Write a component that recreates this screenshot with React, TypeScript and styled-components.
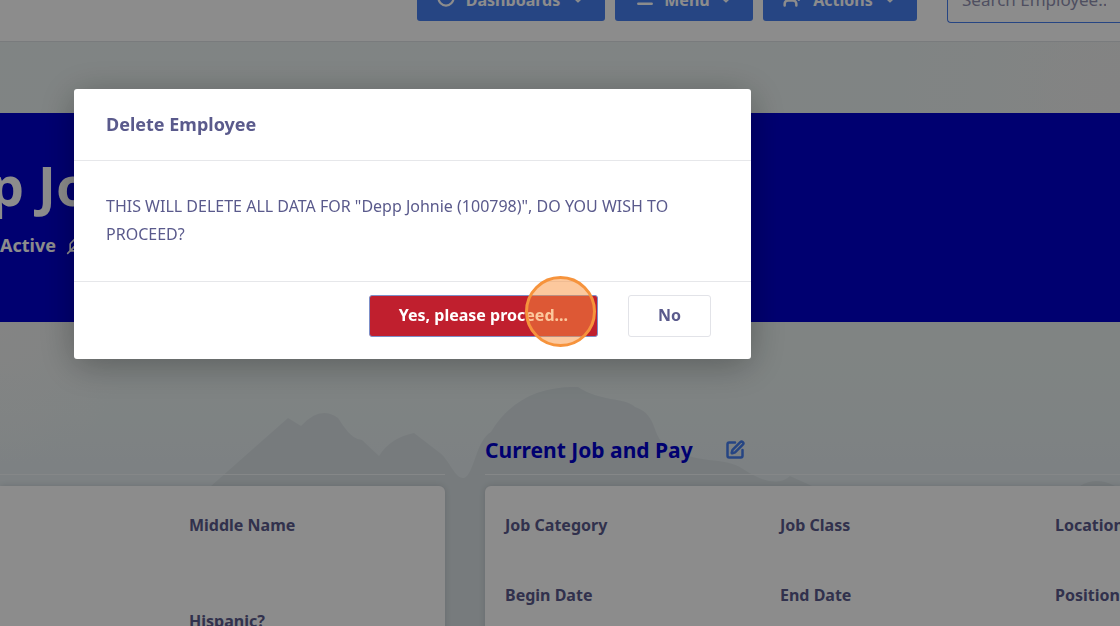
import React from "react";
import styled, { createGlobalStyle } from "styled-components";
import { ChevronDown, Circle, Menu, UserPlus, SquarePen, Feather } from "lucide-react";

const Global = createGlobalStyle`
  * { box-sizing: border-box; }
  html, body { margin: 0; height: 100%; overflow: hidden; }
  body, button, input { font-family: "Noto Sans", "Open Sans", sans-serif; }
  #root { height: 100%; }
`;

const Page = styled.div`
  position: relative;
  height: 100vh;
  overflow: hidden;
  background:
    radial-gradient(circle at 100% 15%, #efefef 0, rgba(239, 239, 239, 0) 220px),
    radial-gradient(circle at 0 52%, #f0f0f0 0, rgba(240, 240, 240, 0) 140px),
    linear-gradient(#eaf1f0 0, #e9f1ef 56%, #e4ecef 74%, #e4ecef 100%);
  color: #5a5a8c;
`;

const Scenery = styled.svg`
  position: absolute;
  inset: 0;
  width: 100%;
  height: 100%;
`;

const Content = styled.div`
  position: relative;
`;

const Header = styled.header`
  display: flex;
  align-items: flex-end;
  height: 42px;
  padding-bottom: 18px;
  border-bottom: 1px solid #dde0e4;
  background: #ffffff;
  overflow: hidden;
`;

const Nav = styled.nav`
  display: flex;
  align-items: center;
  flex: 1;
  min-width: 0;
  gap: 10px;
  height: 46px;
  padding-left: 417px;
`;

const NavButton = styled.button<{ $width: number }>`
  display: flex;
  flex: none;
  align-items: center;
  justify-content: space-between;
  width: ${(p) => p.$width}px;
  height: 42px;
  padding: 0 20px;
  border: 0;
  border-radius: 3px;
  background: #467eef;
  color: #ffffff;
  font-size: 16px;
  font-weight: 700;
  svg:first-child { margin-bottom: 4px; }
`;

const SearchBox = styled.input`
  flex: 1;
  min-width: 0;
  height: 46px;
  margin-left: 20px;
  padding: 0 14px 2px;
  border: 1px solid #467eef;
  border-right: 0;
  border-radius: 4px 0 0 4px;
  background: #ffffff;
  font-size: 17px;
  &::placeholder { color: #9090b0; opacity: 1; }
`;

const Banner = styled.section`
  height: 209px;
  margin-top: 71px;
  padding-top: 36px;
  background: #0000cd;
  color: #ffffff;
  overflow: hidden;
  white-space: nowrap;
`;

const BannerName = styled.h1`
  margin: 0 0 0 -116px;
  font-size: 54px;
  line-height: 72px;
`;

const Status = styled.div`
  display: flex;
  align-items: center;
  gap: 10px;
  margin-top: 10px;
  font-size: 18px;
  line-height: 28px;
  font-weight: 700;
`;

const Columns = styled.main`
  display: grid;
  grid-template-columns: 445px 1fr;
  gap: 40px;
  padding-top: 103px;
`;

const SectionTitle = styled.h2`
  display: flex;
  align-items: center;
  gap: 32px;
  height: 50px;
  margin: 0 0 11px;
  border-bottom: 1px solid #f3f6f7;
  color: #0000cd;
  font-size: 21px;
  line-height: 32px;
`;

const EditButton = styled.button`
  display: flex;
  padding: 0;
  border: 0;
  background: none;
  color: #467eef;
`;

const Card = styled.div<{ $columns: string; $radius: string; $rowGap: number; $inset: number }>`
  display: grid;
  grid-template-columns: ${(p) => p.$columns};
  row-gap: ${(p) => p.$rowGap}px;
  height: 300px;
  padding: 27px 0 27px ${(p) => p.$inset}px;
  align-content: start;
  border-radius: ${(p) => p.$radius};
  background: #ffffff;
  box-shadow: 0 0 6px rgba(60, 70, 80, 0.2);
  white-space: nowrap;
`;

const FieldLabel = styled.div`
  font-size: 16px;
  line-height: 24px;
  font-weight: 700;
`;

const Overlay = styled.div`
  position: fixed;
  inset: 0;
  padding: 89px 74px;
  background: rgba(0, 0, 0, 0.45);
`;

const Dialog = styled.div`
  position: relative;
  max-width: 677px;
  border-radius: 3px;
  background: #ffffff;
  color: #5a5a8c;
  box-shadow: 0 6px 36px rgba(0, 0, 0, 0.3);
`;

const DialogTitle = styled.h3`
  margin: 0;
  padding: 20px 32px 21px;
  border-bottom: 1px solid #e6e7ea;
  font-size: 18px;
  line-height: 30px;
`;

const DialogText = styled.p`
  margin: 0;
  padding: 31px 32px 33px;
  font-size: 16px;
  line-height: 28px;
`;

const DialogActions = styled.div`
  display: flex;
  justify-content: flex-end;
  gap: 30px;
  padding: 13px 40px 22px;
  border-top: 1px solid #e6e7ea;
`;

const DialogButton = styled.button<{ $danger?: boolean }>`
  height: 42px;
  padding: 0 29px 2px;
  border: 1px solid ${(p) => (p.$danger ? "#7d8fc8" : "#e2e3e8")};
  border-radius: 3px;
  background: ${(p) => (p.$danger ? "#c01f2e" : "#ffffff")};
  color: ${(p) => (p.$danger ? "#ffffff" : "#5a5a8c")};
  font-size: 16px;
  font-weight: 700;
`;

const ClickMarker = styled.div`
  position: absolute;
  top: 187px;
  left: 451px;
  width: 71px;
  height: 71px;
  border: 3px solid #f6933c;
  border-radius: 50%;
  background: rgba(250, 145, 60, 0.5);
  pointer-events: none;
`;

export default function App() {
  return (
    <Page>
      <Global />
      <Scenery viewBox="0 0 1120 626" preserveAspectRatio="none" aria-hidden="true">
        <path d="M211 486L288 418L301 426Q320 405 338 418C345 428 350 438 362 440L379 456Q390 438 414 433L440 453C450 461 455 479 464 478C474 475 476 440 491 432C510 400 540 386 578 387C600 402 625 397 635 407C660 415 650 440 670 447C695 465 725 456 743 469Q775 490 790 476L812 486V626H211Z" fill="#d9e1e4" />
        <path d="M1080 486Q1096 476 1115 486Z" fill="#d9e1e4" />
      </Scenery>
      <Content>
        <Header>
          <Nav>
            <NavButton $width={188}><Circle size={18} strokeWidth={3} />Dashboards<ChevronDown size={14} strokeWidth={3} /></NavButton>
            <NavButton $width={138}><Menu size={20} strokeWidth={3} />Menu<ChevronDown size={14} strokeWidth={3} /></NavButton>
            <NavButton $width={154}><UserPlus size={20} strokeWidth={3} />Actions<ChevronDown size={14} strokeWidth={3} /></NavButton>
            <SearchBox aria-label="Search employee" placeholder="Search Employee.." />
          </Nav>
        </Header>
        <Banner>
          <BannerName>Depp Johnie</BannerName>
          <Status>Active <Feather size={20} /></Status>
        </Banner>
        <Columns>
          <section>
            <SectionTitle />
            <Card $columns="1fr" $radius="0 6px 0 0" $rowGap={72} $inset={189}>
              <FieldLabel>Middle Name</FieldLabel>
              <FieldLabel>Hispanic?</FieldLabel>
            </Card>
          </section>
          <section>
            <SectionTitle>Current Job and Pay<EditButton aria-label="Edit"><SquarePen size={20} strokeWidth={3} /></EditButton></SectionTitle>
            <Card $columns="275px 275px 1fr" $radius="6px 0 0 0" $rowGap={46} $inset={20}>
              <FieldLabel>Job Category</FieldLabel>
              <FieldLabel>Job Class</FieldLabel>
              <FieldLabel>Location</FieldLabel>
              <FieldLabel>Begin Date</FieldLabel>
              <FieldLabel>End Date</FieldLabel>
              <FieldLabel>Position</FieldLabel>
            </Card>
          </section>
        </Columns>
      </Content>
      <Overlay>
        <Dialog role="dialog" aria-modal="true" aria-labelledby="dialog-title">
          <DialogTitle id="dialog-title">Delete Employee</DialogTitle>
          <DialogText>THIS WILL DELETE ALL DATA FOR "Depp Johnie (100798)", DO YOU WISH TO PROCEED?</DialogText>
          <DialogActions>
            <DialogButton $danger>Yes, please proceed...</DialogButton>
            <DialogButton>No</DialogButton>
          </DialogActions>
          <ClickMarker />
        </Dialog>
      </Overlay>
    </Page>
  );
}
